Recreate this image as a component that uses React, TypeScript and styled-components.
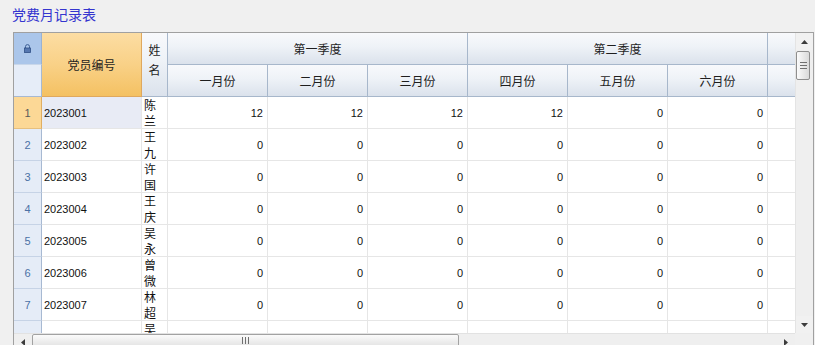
import React from 'react';
import styled, { createGlobalStyle, css } from 'styled-components';

const GlobalStyle = createGlobalStyle`
  html, body { margin: 0; padding: 0; background: #f0f0f0; }
  body { font-family: "Liberation Sans", "Noto Sans CJK SC", sans-serif; overflow: hidden; }
  * { box-sizing: border-box; }
`;

const Page = styled.div`
  width: 815px;
  height: 345px;
  overflow: hidden;
  padding: 4px 0 0 12px;
  display: flex;
  flex-direction: column;
`;

const Title = styled.div`
  font-family: "Noto Sans CJK SC", sans-serif;
  font-size: 14px;
  line-height: 20px;
  height: 20px;
  color: #3535cf;
  margin-bottom: 8px;
`;

const Frame = styled.div`
  margin-left: 1px;
  width: 801px;
  border: 1px solid #a0a0a0;
  border-bottom: none;
  display: grid;
  grid-template-columns: 781px 18px;
  grid-template-rows: 300px 17px;
  background: #ffffff;
`;

const Viewport = styled.div`
  overflow: hidden;
  background: #ffffff;
`;

const Table = styled.div`
  display: grid;
  grid-template-columns: 28px 100px 26px repeat(9, 100px);
  grid-auto-rows: 32px;
  width: max-content;
`;

type HeadTone = 'normal' | 'sorted' | 'corner' | 'cornerLow';

const toneStyles: Record<HeadTone, ReturnType<typeof css>> = {
  normal: css`
    background: linear-gradient(to bottom, #f8f9fc 0%, #eef2f7 45%, #dbe2ec 100%);
    border-right: 1px solid #a7b7cb;
    border-bottom: 1px solid #a7b7cb;
  `,
  sorted: css`
    background: linear-gradient(to bottom, #fcdda3 0%, #f9d187 50%, #f4c162 100%);
    border-right: 1px solid #dfa85e;
    border-bottom: 1px solid #dfa85e;
  `,
  corner: css`
    background: #abc6ea;
    border-right: 1px solid #9ab2d3;
    border-bottom: 1px solid #c9d7ea;
  `,
  cornerLow: css`
    background: #e6edf8;
    border-right: 1px solid #a7b9d2;
    border-bottom: 1px solid #a7b9d2;
  `,
};

const HeadCell = styled.div<{ $col: string; $row: string; $tone?: HeadTone }>`
  grid-column: ${(p) => p.$col};
  grid-row: ${(p) => p.$row};
  display: flex;
  align-items: center;
  justify-content: center;
  font-family: "Noto Sans CJK SC", sans-serif;
  font-size: 12px;
  color: #1e1e1e;
  white-space: nowrap;
  ${(p) => toneStyles[p.$tone ?? 'normal']}
`;

const VerticalHead = styled(HeadCell)`
  white-space: normal;
  text-align: center;
  line-height: 20px;
  padding: 0 6px 10px;
  word-break: break-all;
`;

const RowHead = styled.div<{ $active?: boolean }>`
  display: flex;
  align-items: center;
  justify-content: center;
  font-size: 11px;
  color: ${(p) => (p.$active ? '#5a5a5a' : '#4b71a6')};
  background: ${(p) => (p.$active ? '#fcd896' : '#e5ecf7')};
  border-right: 1px solid ${(p) => (p.$active ? '#e0ae62' : '#a7b9d2')};
  border-bottom: 1px solid ${(p) => (p.$active ? '#e7c07e' : '#c6d3e6')};
`;

const Cell = styled.div<{ $align?: 'left' | 'right'; $selected?: boolean }>`
  display: flex;
  align-items: center;
  justify-content: ${(p) => (p.$align === 'right' ? 'flex-end' : 'flex-start')};
  padding: ${(p) => (p.$align === 'right' ? '0 4px 0 0' : '0 0 0 2px')};
  font-size: 11px;
  color: #111;
  background: ${(p) => (p.$selected ? '#e8ebf5' : '#ffffff')};
  border-right: 1px solid #e6e6e6;
  border-bottom: 1px solid #e6e6e6;
  white-space: nowrap;
`;

const NameCell = styled.div`
  display: flex;
  align-items: center;
  padding: 0 2px;
  font-family: "Noto Sans CJK SC", sans-serif;
  font-size: 12px;
  line-height: 16px;
  color: #111;
  background: #ffffff;
  border-right: 1px solid #e6e6e6;
  border-bottom: 1px solid #e6e6e6;
  word-break: break-all;
`;

const VScroll = styled.div`
  grid-column: 2;
  grid-row: 1;
  display: flex;
  flex-direction: column;
  background: #f1f1f1;
  border-left: 1px solid #e4e4e4;
`;

const HScroll = styled.div`
  grid-column: 1;
  grid-row: 2;
  display: flex;
  background: #efefef;
  border-top: 1px solid #e2e2e2;
`;

const ScrollCorner = styled.div`
  grid-column: 2;
  grid-row: 2;
  background: #f0f0f0;
`;

const ArrowBtn = styled.div<{ $vertical?: boolean }>`
  flex: 0 0 ${(p) => (p.$vertical ? '17px' : '18px')};
  display: flex;
  align-items: center;
  justify-content: center;
`;

const Track = styled.div<{ $vertical?: boolean }>`
  flex: 1;
  display: flex;
  flex-direction: ${(p) => (p.$vertical ? 'column' : 'row')};
  background: #efefef;
`;

const VThumb = styled.div`
  width: 14px;
  height: 29px;
  margin: 1px 0 0 0;
  border: 1px solid #8e8e8e;
  border-radius: 2px;
  background: linear-gradient(to right, #fbfbfb, #e7e7e7 60%, #dadada);
  display: flex;
  align-items: center;
  justify-content: center;
`;

const HThumb = styled.div`
  width: 427px;
  height: 17px;
  border: 1px solid #a2a2a2;
  border-radius: 2px;
  background: linear-gradient(to bottom, #fbfbfb, #ebebeb 50%, #dcdcdc);
  display: flex;
  align-items: center;
  justify-content: center;
  padding-bottom: 4px;
`;

const Grip = styled.div<{ $vertical?: boolean }>`
  width: 7px;
  height: 7px;
  background: ${(p) =>
    p.$vertical
      ? 'repeating-linear-gradient(to bottom, #6f6f6f 0 1px, transparent 1px 3px)'
      : 'repeating-linear-gradient(to right, #6f6f6f 0 1px, transparent 1px 3px)'};
`;

const Arrow = ({ dir }: { dir: 'up' | 'down' | 'left' | 'right' }) => {
  const paths: Record<string, string> = {
    up: 'M0 4 L3.5 0 L7 4 Z',
    down: 'M0 0 L7 0 L3.5 4 Z',
    left: 'M4 0 L4 7 L0 3.5 Z',
    right: 'M0 0 L4 3.5 L0 7 Z',
  };
  const vertical = dir === 'up' || dir === 'down';
  return (
    <svg width={vertical ? 7 : 4} height={vertical ? 4 : 7} viewBox={vertical ? '0 0 7 4' : '0 0 4 7'}>
      <path d={paths[dir]} fill="#3c3c3c" />
    </svg>
  );
};

const LockIcon = () => (
  <svg width="7" height="9" viewBox="0 0 7 9">
    <path d="M1.5 4 V2.6 A2 2 0 0 1 5.5 2.6 V4" fill="none" stroke="#3d5f95" strokeWidth="1" />
    <rect x="0.5" y="4" width="6" height="4.5" fill="#5577b0" stroke="#2f4f86" strokeWidth="0.8" />
  </svg>
);

const months = ['一月份', '二月份', '三月份', '四月份', '五月份', '六月份', '七月份', '八月份', '九月份'];
const quarters = [
  { label: '第一季度', col: '4 / span 3' },
  { label: '第二季度', col: '7 / span 3' },
  { label: '第三季度', col: '10 / span 3' },
];

const members: { id: string; name: string; fees: number[] }[] = [
  { id: '2023001', name: '陈兰', fees: [12, 12, 12, 12, 0, 0, 0, 0, 0] },
  { id: '2023002', name: '王九', fees: [0, 0, 0, 0, 0, 0, 0, 0, 0] },
  { id: '2023003', name: '许国', fees: [0, 0, 0, 0, 0, 0, 0, 0, 0] },
  { id: '2023004', name: '王庆', fees: [0, 0, 0, 0, 0, 0, 0, 0, 0] },
  { id: '2023005', name: '吴永', fees: [0, 0, 0, 0, 0, 0, 0, 0, 0] },
  { id: '2023006', name: '曾微', fees: [0, 0, 0, 0, 0, 0, 0, 0, 0] },
  { id: '2023007', name: '林超', fees: [0, 0, 0, 0, 0, 0, 0, 0, 0] },
  { id: '2023008', name: '吴芳', fees: [0, 0, 0, 0, 0, 0, 0, 0, 0] },
];

export default function App() {
  return (
    <>
      <GlobalStyle />
      <Page>
        <Title>党费月记录表</Title>
        <Frame>
          <Viewport>
            <Table>
              <HeadCell $col="1" $row="1" $tone="corner">
                <LockIcon />
              </HeadCell>
              <HeadCell $col="1" $row="2" $tone="cornerLow" />
              <HeadCell $col="2" $row="1 / span 2" $tone="sorted">
                党员编号
              </HeadCell>
              <VerticalHead $col="3" $row="1 / span 2">
                姓名
              </VerticalHead>
              {quarters.map((q) => (
                <HeadCell key={q.label} $col={q.col} $row="1">
                  {q.label}
                </HeadCell>
              ))}
              {months.map((m, i) => (
                <HeadCell key={m} $col={String(4 + i)} $row="2">
                  {m}
                </HeadCell>
              ))}
              {members.map((m, r) => (
                <React.Fragment key={m.id}>
                  <RowHead $active={r === 0}>{r + 1}</RowHead>
                  <Cell $selected={r === 0}>{m.id}</Cell>
                  <NameCell>{m.name}</NameCell>
                  {m.fees.map((f, i) => (
                    <Cell key={i} $align="right">
                      {f}
                    </Cell>
                  ))}
                </React.Fragment>
              ))}
            </Table>
          </Viewport>
          <VScroll>
            <ArrowBtn $vertical>
              <Arrow dir="up" />
            </ArrowBtn>
            <Track $vertical>
              <VThumb>
                <Grip $vertical />
              </VThumb>
            </Track>
            <ArrowBtn $vertical>
              <Arrow dir="down" />
            </ArrowBtn>
          </VScroll>
          <HScroll>
            <ArrowBtn>
              <Arrow dir="left" />
            </ArrowBtn>
            <Track>
              <HThumb>
                <Grip />
              </HThumb>
            </Track>
            <ArrowBtn>
              <Arrow dir="right" />
            </ArrowBtn>
          </HScroll>
          <ScrollCorner />
        </Frame>
      </Page>
    </>
  );
}
